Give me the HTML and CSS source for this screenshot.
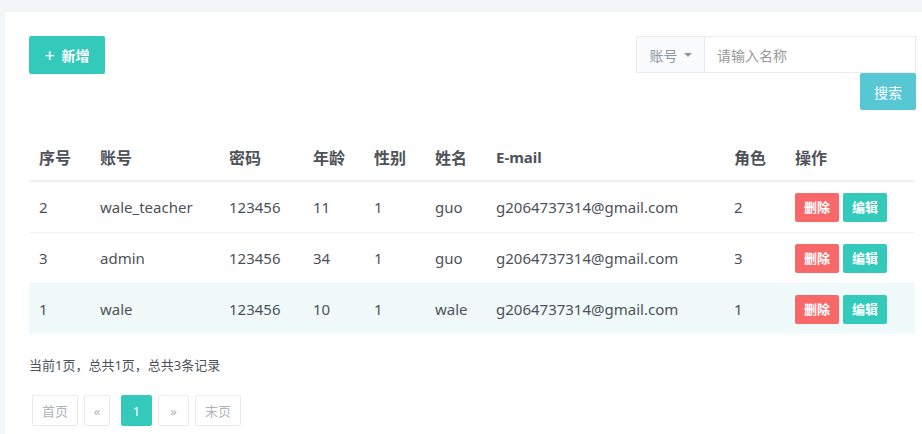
FILE: index.html
```html
<!DOCTYPE html>
<html>
<head>
<meta charset="utf-8">
<link rel="stylesheet" href="styles.css">
</head>
<body>
<div class="panel">
  <div class="toolbar">
    <button class="btn btn-add"><span class="plus">+</span> 新增</button>
    <div class="search">
      <div class="input-group">
        <div class="addon">账号 <span class="caret"></span></div>
        <div class="input">请输入名称</div>
      </div>
      <button class="btn btn-search">搜索</button>
    </div>
  </div>
  <table class="grid">
    <colgroup>
      <col class="c1"><col class="c2"><col class="c3"><col class="c4"><col class="c5"><col class="c6"><col class="c7"><col class="c8"><col class="c9">
    </colgroup>
    <thead>
      <tr><th>序号</th><th>账号</th><th>密码</th><th>年龄</th><th>性别</th><th>姓名</th><th class="en">E-mail</th><th>角色</th><th>操作</th></tr>
    </thead>
    <tbody>
      <tr><td>2</td><td>wale_teacher</td><td>123456</td><td>11</td><td>1</td><td>guo</td><td>g2064737314@gmail.com</td><td>2</td><td><span class="act del">删除</span><span class="act edit">编辑</span></td></tr>
      <tr><td>3</td><td>admin</td><td>123456</td><td>34</td><td>1</td><td>guo</td><td>g2064737314@gmail.com</td><td>3</td><td><span class="act del">删除</span><span class="act edit">编辑</span></td></tr>
      <tr class="hl"><td>1</td><td>wale</td><td>123456</td><td>10</td><td>1</td><td>wale</td><td>g2064737314@gmail.com</td><td>1</td><td><span class="act del">删除</span><span class="act edit">编辑</span></td></tr>
    </tbody>
  </table>
  <div class="summary">当前1页，总共1页，总共3条记录</div>
  <div class="pager">
    <span class="pg w">首页</span>
    <span class="pg prev">«</span>
    <span class="pg active">1</span>
    <span class="pg next">»</span>
    <span class="pg w">末页</span>
  </div>
</div>
</body>
</html>
```
FILE: styles.css
```css
html, body {
  margin: 0;
  padding: 0;
  background: #f4f5f9;
  overflow: hidden;
  height: 434px;
}
body {
  padding: 12px 0 0 5px;
  font-family: "Noto Sans", "Noto Sans CJK SC", sans-serif;
  color: #4d5259;
  font-size: 14px;
}
.panel {
  background: #fff;
  padding: 24px 6px 0 24px;
  height: 500px;
}
.toolbar {
  display: flex;
  justify-content: space-between;
  align-items: flex-start;
}
.btn {
  border: none;
  color: #fff;
  font-family: inherit;
  border-radius: 2px;
  padding: 0;
  cursor: pointer;
}
.btn-add {
  background: #33cabb;
  width: 76px;
  height: 38px;
  font-size: 14px;
  font-weight: bold;
}
.plus { font-weight: normal; font-size: 18px; margin-right: 3px; vertical-align: -1px; }
.search {
  display: flex;
  flex-direction: column;
  align-items: flex-end;
}
.input-group {
  display: flex;
  width: 280px;
  height: 37px;
  box-sizing: border-box;
  border: 1px solid #ebebeb;
}
.addon {
  width: 67px;
  background: #fafbfc;
  border-right: 1px solid #ebebeb;
  display: flex;
  align-items: center;
  justify-content: center;
  color: #8b95a5;
  font-size: 14px;
}
.caret {
  display: inline-block;
  width: 0;
  height: 0;
  border-left: 4px solid transparent;
  border-right: 4px solid transparent;
  border-top: 4px solid #8b95a5;
  margin-left: 6px;
}
.input {
  flex: 1;
  display: flex;
  align-items: center;
  padding-left: 12px;
  color: #999;
  font-size: 14px;
}
.btn-search {
  background: #57c7d4;
  width: 56px;
  height: 37px;
  font-size: 14px;
}
.grid {
  width: 886px;
  border-collapse: collapse;
  table-layout: fixed;
  margin-top: 23px;
}
.c1 { width: 61px; }
.c2 { width: 129px; }
.c3 { width: 84px; }
.c4 { width: 61px; }
.c5 { width: 61px; }
.c6 { width: 61px; }
.c7 { width: 238px; }
.c8 { width: 61px; }
.c9 { width: 130px; }
.grid th {
  text-align: left;
  font-size: 16px;
  font-weight: bold;
  padding: 0 10px;
  height: 47px;
  border-bottom: 2px solid #eceeef;
  color: #4d5259;
}
.grid th.en { font-size: 15px; }
.grid td {
  padding: 0 10px;
  height: 50px;
  border-bottom: 1px solid #f1f2f3;
  font-size: 15px;
  white-space: nowrap;
}
.grid tr.hl td { background: #f0fafb; border-bottom: none; }
.act {
  display: inline-block;
  width: 44px;
  height: 29px;
  line-height: 29px;
  text-align: center;
  color: #fff;
  border-radius: 2px;
  font-size: 13px;
  font-weight: bold;
  vertical-align: middle;
}
.del { background: #f96868; margin-right: 4px; }
.edit { background: #33cabb; }
.summary {
  margin-top: 21px;
  font-size: 13px;
  color: #4d5259;
}
.pager {
  display: flex;
  margin-top: 21px;
  margin-left: 3px;
}
.pg {
  box-sizing: border-box;
  height: 31px;
  border: 1px solid #ebebeb;
  color: #b0b4ba;
  font-size: 13px;
  display: flex;
  align-items: center;
  justify-content: center;
  border-radius: 2px;
}
.pg.w { width: 46px; }
.pg.prev { width: 26px; margin: 0 11px 0 6px; }
.pg.active {
  background: #33cabb;
  border-color: #33cabb;
  color: #fff;
  width: 31px;
  margin-right: 6px;
}
.pg.next { width: 31px; margin-right: 6px; }
```
